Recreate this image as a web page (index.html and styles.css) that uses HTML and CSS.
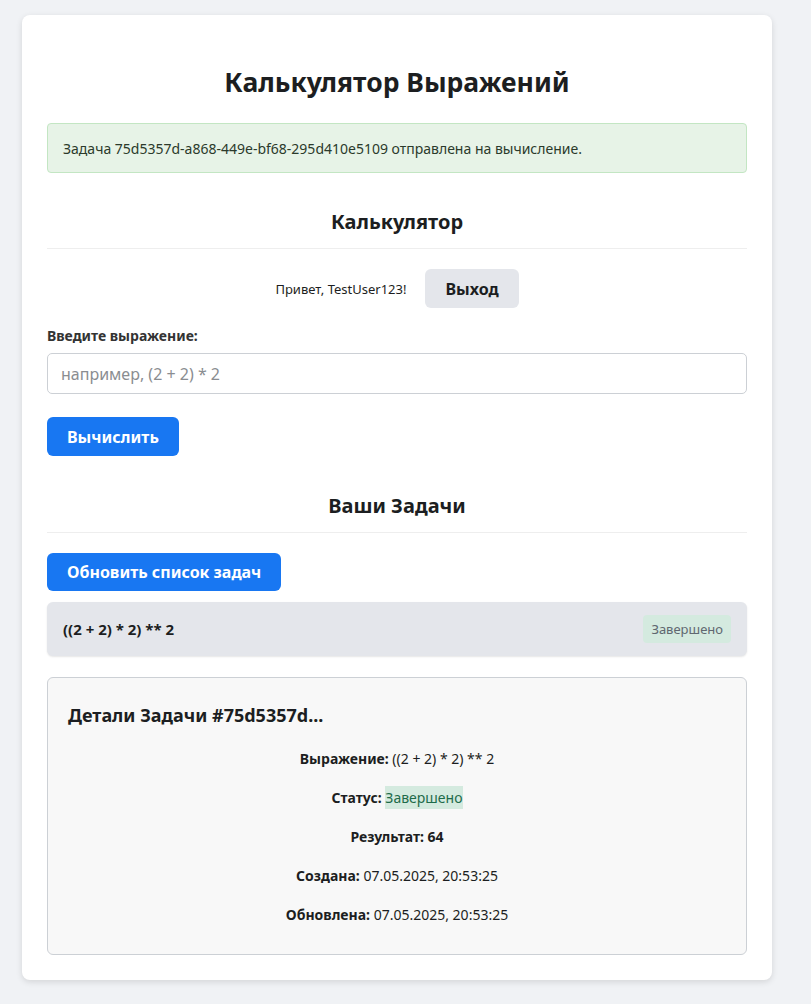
FILE: index.html
```html
<!DOCTYPE html>
<html lang="ru">
<head>
<meta charset="utf-8">
<title>Калькулятор Выражений</title>
<link rel="stylesheet" href="styles.css">
</head>
<body>
<div class="card">
  <h1 class="title">Калькулятор Выражений</h1>
  <div class="alert">Задача 75d5357d-a868-449e-bf68-295d410e5109 отправлена на вычисление.</div>

  <h2 class="section">Калькулятор</h2>
  <div class="user-row">
    <span class="greet">Привет, TestUser123!</span>
    <button class="btn btn-gray">Выход</button>
  </div>
  <label class="label" for="expr">Введите выражение:</label>
  <input id="expr" class="input" type="text" placeholder="например, (2 + 2) * 2">
  <button class="btn btn-blue">Вычислить</button>

  <h2 class="section section-tasks">Ваши Задачи</h2>
  <button class="btn btn-blue btn-refresh">Обновить список задач</button>
  <div class="task">
    <span class="task-expr">((2 + 2) * 2) ** 2</span>
    <span class="badge">Завершено</span>
  </div>

  <div class="details">
    <h3 class="details-title">Детали Задачи #75d5357d...</h3>
    <p class="row"><b>Выражение:</b> ((2 + 2) * 2) ** 2</p>
    <p class="row"><b>Статус:</b> <span class="status">Завершено</span></p>
    <p class="row"><b>Результат: 64</b></p>
    <p class="row"><b>Создана:</b> 07.05.2025, 20:53:25</p>
    <p class="row"><b>Обновлена:</b> 07.05.2025, 20:53:25</p>
  </div>
</div>
</body>
</html>
```

FILE: styles.css
```css
html, body {
  margin: 0;
  padding: 0;
}
body {
  background: #f0f2f5;
  font-family: "Noto Sans", "Open Sans", sans-serif;
  color: #1c1e21;
  padding: 15px 0 24px 22px;
}
.card {
  width: 700px;
  background: #fff;
  border-radius: 8px;
  box-shadow: 0 2px 6px rgba(0,0,0,0.12);
  padding: 50px 25px 25px;
}
.title {
  margin: 0 0 24px;
  text-align: center;
  font-size: 26.5px;
  font-weight: 700;
  line-height: 1.3;
}
.alert {
  background: #e7f3e7;
  border: 1px solid #c3e6c3;
  border-radius: 4px;
  padding: 15px 15px 14px;
  font-size: 14px;
  line-height: 19px;
  color: #2b3a2b;
}
.section {
  margin: 35px 0 0;
  text-align: center;
  font-size: 20px;
  font-weight: 700;
  line-height: 28px;
  padding-bottom: 12px;
  border-bottom: 1px solid #eeeeee;
}
.user-row {
  display: flex;
  justify-content: center;
  align-items: center;
  gap: 19px;
  margin-top: 20px;
}
.greet {
  font-size: 13px;
  color: #1c1e21;
}
.btn {
  font-family: inherit;
  font-size: 16px;
  font-weight: 700;
  border: none;
  border-radius: 6px;
  padding: 0 20px;
  height: 39px;
  cursor: pointer;
}
.btn-gray {
  background: #e4e6eb;
  color: #1c1e21;
}
.btn-blue {
  background: #1877f2;
  color: #fff;
  display: block;
}
.label {
  display: block;
  margin-top: 18px;
  font-size: 14px;
  font-weight: 700;
  color: #333;
  line-height: 20px;
}
.input {
  display: block;
  box-sizing: border-box;
  width: 100%;
  height: 41px;
  margin-top: 7px;
  margin-bottom: 23px;
  padding: 0 13px;
  font-family: inherit;
  font-size: 16px;
  border: 1px solid #ccd0d5;
  border-radius: 5px;
}
.input::placeholder {
  color: #8a8d91;
}
.section-tasks {
  margin-top: 36px;
}
.btn-refresh {
  margin-top: 20px;
  height: 38px;
}
.task {
  display: flex;
  justify-content: space-between;
  align-items: center;
  margin-top: 11px;
  background: #e4e6eb;
  border-radius: 6px;
  padding: 0 16px;
  height: 54px;
  box-shadow: 0 1px 2px rgba(0,0,0,0.1);
}
.task-expr {
  font-size: 15px;
  font-weight: 700;
}
.badge {
  background: #d4eadf;
  color: #606770;
  font-size: 13px;
  padding: 5px 8px;
  border-radius: 4px;
}
.details {
  margin-top: 21px;
  background: #f8f8f8;
  border: 1px solid #ccd0d5;
  border-radius: 6px;
  padding: 24px 20px 29px;
}
.details-title {
  margin: 0 0 21px;
  font-size: 18px;
  font-weight: 700;
  line-height: 26px;
}
.row {
  margin: 0 0 19px;
  text-align: center;
  font-size: 14px;
  line-height: 20px;
  color: #1c1e21;
}
.row:last-child {
  margin-bottom: 0;
}
.status {
  background: #d4eadf;
  color: #1e6b4a;
  padding: 2px 0;
}
```
